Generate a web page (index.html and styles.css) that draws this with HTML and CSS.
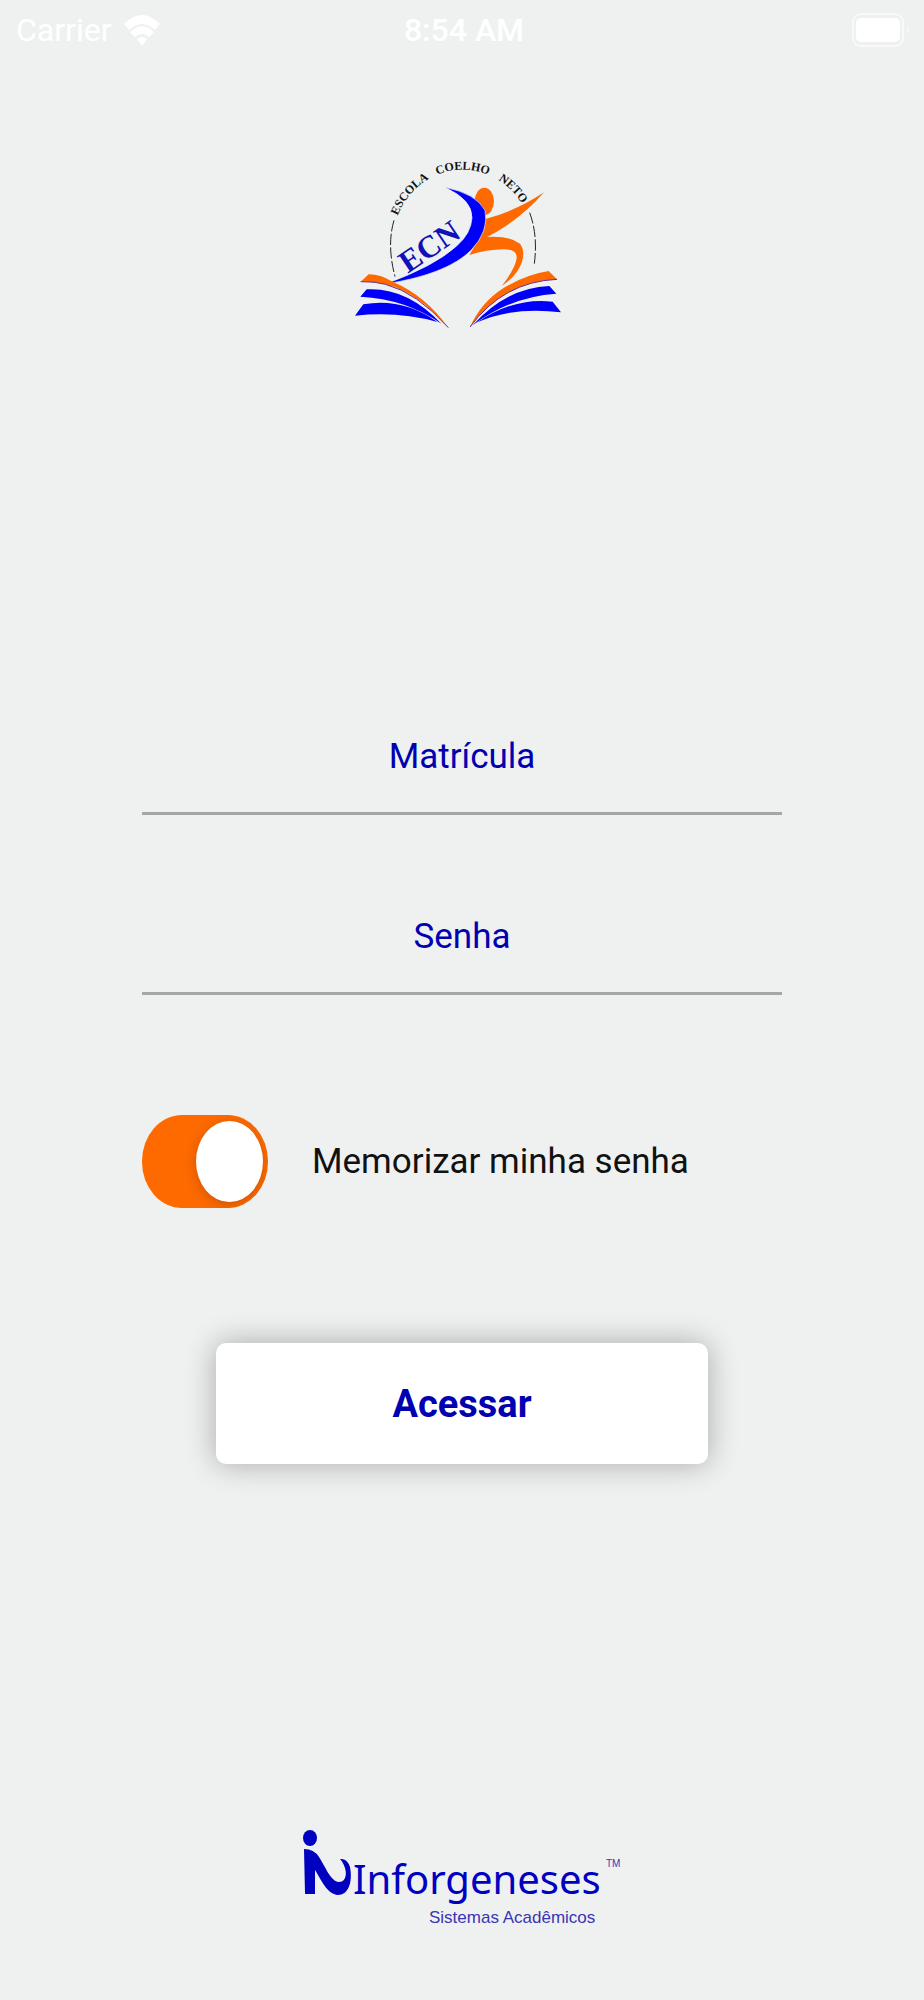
FILE: index.html
```html
<!DOCTYPE html>
<html lang="pt-BR">
<head>
    <meta charset="UTF-8">
    <meta name="viewport" content="width=device-width, initial-scale=1.0">
    <title>Escola Coelho Neto</title>
    <link rel="stylesheet" href="styles.css">
</head>
<body>
    <header class="status-bar">
        <div class="carrier">
            <span>Carrier</span>
            <svg class="wifi" viewBox="0 0 36 33" aria-hidden="true">
                <path d="M0 10 Q18 -8 36 10 L31 16 Q18 4 5 16 Z"/>
                <path d="M6 18 Q18 6 30 18 L25 23 Q18 17 11 23 Z"/>
                <path d="M13 25 Q18 21 23 25 L18 32 Z"/>
            </svg>
        </div>
        <div class="time">8:54 AM</div>
        <div class="battery-box">
            <svg class="battery" viewBox="0 0 60 34" aria-hidden="true">
                <rect class="battery-case" x="1" y="1" width="50" height="32" rx="8"/>
                <rect x="4" y="5" width="44" height="24" rx="5"/>
                <path class="battery-tip" d="M55 13 Q59 17 55 21 Z"/>
            </svg>
        </div>
    </header>

    <main class="login">
        <svg class="school-logo" viewBox="6 0 720 585" role="img" aria-label="Escola Coelho Neto">
            <path id="arc" fill="none" d="M156 300 A212 226 0 0 1 580 300"/>
            <g class="arc-text">
                <text><textPath href="#arc" startOffset="90">ESCOLA</textPath></text>
                <text><textPath href="#arc" startOffset="265">COELHO</textPath></text>
                <text><textPath href="#arc" startOffset="456">NETO</textPath></text>
            </g>
            <path class="ring" d="M162 226 Q140 300 165 395 M569 203 Q594 270 583 356"/>
            <!-- runner -->
            <g class="orange">
                <ellipse cx="433" cy="169" rx="29" ry="41"/>
                <path d="M436 222 Q528 198 612 142 Q544 222 442 276 Q510 272 540 296 Q556 318 546 350 Q532 392 486 422 Q526 370 530 340 Q532 313 492 313 Q440 314 388 330 L424 270 Q438 244 436 222 Z"/>
            </g>
            <path class="swoosh" d="M314 127 Q408 145 435 196 Q448 258 394 315 Q322 388 136 417 Q284 363 350 303 Q394 264 396 218 Q397 164 314 127 Z"/>
            <text class="initials" transform="translate(203 386) rotate(-34)">ECN</text>
            <!-- open book -->
            <g class="orange">
                <path d="M86 388 Q118 387 158 410 Q257 452 325 548 Q230 440 136 418 Q105 409 62 410 Z"/>
                <path d="M626 378 L651 403 Q490 410 390 546 Q424 470 492 428 Q560 388 626 378 Z"/>
            </g>
            <g class="blue">
                <path d="M80 433 Q200 426 304 536 Q198 462 61 455 Z"/>
                <path d="M70 478 Q188 457 292 531 Q176 498 45 512 Z"/>
                <path d="M628 423 L649 446 Q512 455 398 541 Q500 428 628 423 Z"/>
                <path d="M638 470 L663 502 Q520 484 412 532 Q522 456 638 470 Z"/>
            </g>
            <path class="page-edge" d="M62 410 Q105 409 136 418 Q230 442 325 548 M651 403 Q490 410 390 546"/>
        </svg>

        <form class="login-form">
            <input class="field" type="text" name="matricula" placeholder="Matrícula" aria-label="Matrícula">
            <input class="field" type="password" name="senha" placeholder="Senha" aria-label="Senha">
            <div class="remember">
                <input class="switch" type="checkbox" id="memorizar" checked>
                <label for="memorizar">Memorizar minha senha</label>
            </div>
            <button class="submit" type="submit">Acessar</button>
        </form>
    </main>

    <footer class="footer">
        <svg class="brand" viewBox="-3 0 350 120" role="img" aria-label="Inforgeneses Sistemas Acadêmicos">
            <ellipse cx="20" cy="18" rx="7" ry="8"/>
            <path d="M14 29 Q24 29 29 37 C35 46 41 62 49 62 C58 62 58 48 50 39 Q57 38 60 47 C63 63 58 75 48 75 C37 74 32 61 25 50 L25 74 L15 74 Z"/>
            <text class="brand-name" x="63" y="74">Inforgeneses</text>
            <text class="brand-tm" x="316" y="47">TM</text>
            <text class="brand-sub" x="139" y="103">Sistemas Acadêmicos</text>
        </svg>
    </footer>
</body>
</html>
```
FILE: styles.css
```css
* {
    box-sizing: border-box;
}
body {
    display: flex;
    flex-direction: column;
    min-height: 100vh;
    margin: 0;
    background-color: #eff1f1;
    color: #111;
    font-family: Roboto, "Liberation Sans", sans-serif;
    font-size: 35px;
}
.status-bar {
    display: grid;
    grid-template-columns: 1fr auto 1fr;
    align-items: center;
    height: 60px;
    padding: 0 12px 0 16px;
    color: #fff;
    fill: #fff;
    font-size: 32px;
}
.carrier {
    display: flex;
    align-items: center;
    gap: 12px;
}
.wifi {
    width: 36px;
    height: 33px;
}
.time {
    font-weight: 500;
}
.battery-box {
    display: flex;
    justify-content: flex-end;
}
.battery {
    width: 60px;
    height: 34px;
}
.battery-case {
    fill: none;
    stroke: #f8f9f9;
    stroke-width: 2;
}
.battery-tip {
    fill: #f8f9f9;
}
.login {
    display: flex;
    flex-direction: column;
    align-items: center;
    padding-top: 85px;
}
.school-logo {
    width: 240px;
    height: 195px;
}
.arc-text {
    fill: #111;
    font: bold 36px "Liberation Serif", serif;
}
.ring {
    fill: none;
    stroke: #222;
    stroke-width: 3;
    stroke-dasharray: 34 7;
}
.orange {
    fill: #ff6a00;
}
.blue {
    fill: #0000fa;
}
.swoosh {
    fill: #0000fa;
    stroke: #eff1f1;
    stroke-width: 2;
}
.initials {
    fill: #1111b8;
    font: bold 94px "Liberation Serif", serif;
}
.page-edge {
    fill: none;
    stroke: #6a2a9a;
    stroke-width: 3;
}
.login-form {
    display: flex;
    flex-direction: column;
    width: 70%;
    max-width: 640px;
    margin-top: 360px;
}
.field {
    width: 100%;
    height: 115px;
    margin-bottom: 65px;
    padding: 0;
    border: none;
    border-bottom: 3px solid #a5a7a7;
    border-radius: 0;
    outline: none;
    background: none;
    color: #0000b0;
    font: inherit;
    text-align: center;
}
.field::placeholder {
    color: #0000b0;
    opacity: 1;
}
.remember {
    display: flex;
    align-items: center;
    gap: 44px;
    margin-top: 55px;
}
.switch {
    display: flex;
    align-items: center;
    justify-content: flex-end;
    appearance: none;
    width: 126px;
    height: 93px;
    margin: 0;
    padding: 0 5px;
    border-radius: 40px / 46px;
    background-color: #ccc;
    cursor: pointer;
    overflow: hidden;
}
.switch::before {
    content: "";
    width: 67px;
    height: 81px;
    border-radius: 50%;
    background-color: #fff;
    box-shadow: 0 3px 14px rgba(0, 0, 0, 0.2);
}
.switch:checked {
    background-color: #ff6a00;
}
.switch:not(:checked) {
    justify-content: flex-start;
}
.submit {
    align-self: center;
    width: 77%;
    height: 121px;
    margin-top: 135px;
    border: none;
    border-radius: 10px;
    background-color: #fff;
    box-shadow: 0 0 30px rgba(0, 0, 0, 0.3);
    color: #0000b0;
    font: inherit;
    font-size: 38px;
    font-weight: bold;
    cursor: pointer;
}
.footer {
    display: flex;
    justify-content: center;
    margin-top: auto;
    padding-bottom: 60px;
}
.brand {
    width: 350px;
    height: 120px;
    fill: #0000c0;
}
.brand-name {
    font-family: "Noto Sans", sans-serif;
    font-size: 40px;
}
.brand-sub {
    fill: #3a34b4;
    font-family: "Liberation Sans", sans-serif;
    font-size: 17px;
}
.brand-tm {
    fill: #3a34b4;
    font-family: "Liberation Sans", sans-serif;
    font-size: 10px;
}
```
